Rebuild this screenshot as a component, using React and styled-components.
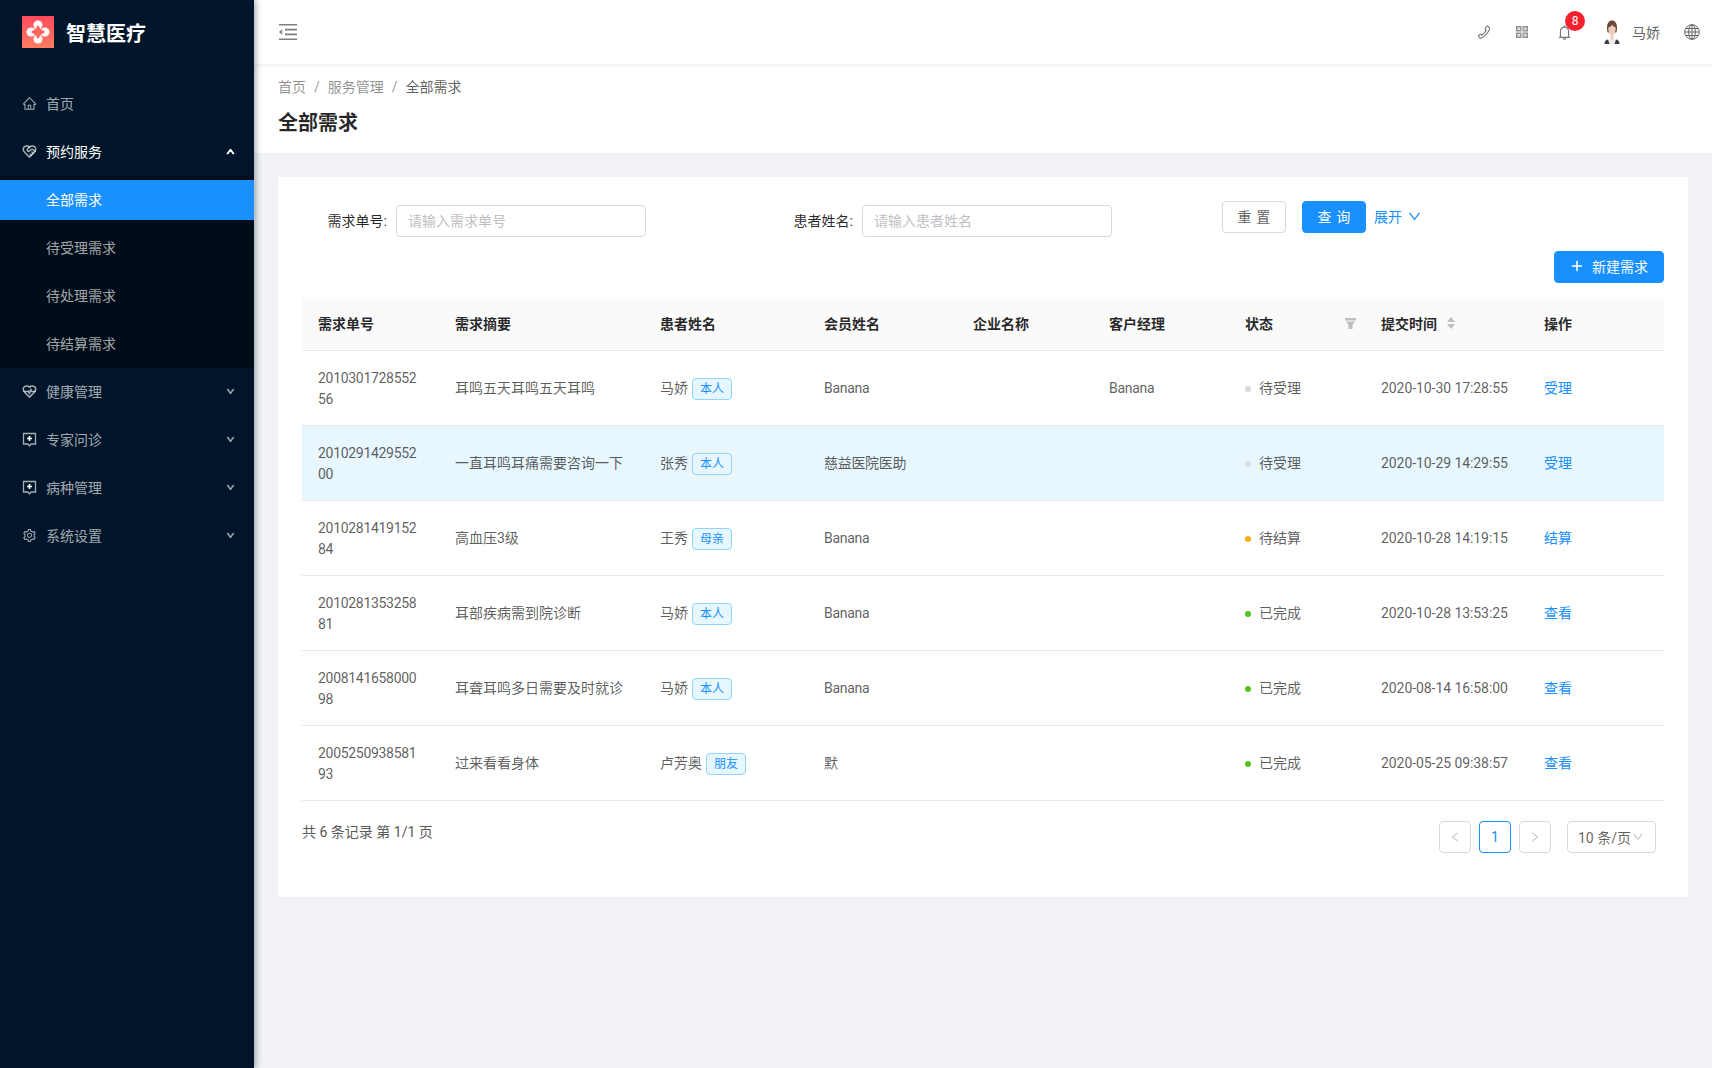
import React from 'react';
import styled, { createGlobalStyle } from 'styled-components';
import {
  AiOutlineHome,
  AiOutlineSetting,
  AiOutlinePlus,
  AiOutlineDown,
  AiOutlineUp,
  AiOutlineLeft,
  AiOutlineRight,
  AiOutlineBell,
} from 'react-icons/ai';
import { LuHeartHandshake, LuHeartPulse } from 'react-icons/lu';

const GlobalStyle = createGlobalStyle`
  html, body {
    margin: 0;
    padding: 0;
    background: #f0f2f5;
    font-family: Roboto, "Noto Sans CJK SC", sans-serif;
    font-size: 14px;
    color: #595959;
  }
  * {
    box-sizing: border-box;
  }
`;

const Layout = styled.div`
  display: flex;
  min-height: 1068px;
`;

const Sidebar = styled.aside`
  flex: 0 0 254px;
  background: #001529;
  box-shadow: 2px 0 6px rgba(0, 21, 41, 0.35);
  position: relative;
  z-index: 2;
`;

const Brand = styled.div`
  display: flex;
  align-items: center;
  gap: 12px;
  height: 64px;
  padding-left: 22px;
  margin-bottom: 16px;
`;

const BrandName = styled.span`
  color: #fff;
  font-size: 20px;
  font-weight: 700;
  font-family: "Noto Sans CJK SC", sans-serif;
`;

const MenuItem = styled.div`
  display: flex;
  align-items: center;
  height: 48px;
  padding: 0 19px 2px 22px;
  color: ${(p) => (p.$open ? '#fff' : 'rgba(255, 255, 255, 0.65)')};
`;

const MenuIcon = styled.span`
  display: flex;
  width: 24px;
  font-size: 15px;
  color: rgba(255, 255, 255, 0.65);
`;

const MenuLabel = styled.span`
  flex: 1;
`;

const MenuArrow = styled.span`
  display: flex;
  font-size: 9px;
  color: ${(p) => (p.$open ? '#fff' : 'rgba(255, 255, 255, 0.45)')};
  svg {
    stroke: currentColor;
    stroke-width: 120;
  }
`;

const SubMenu = styled.div`
  background: #000c17;
  padding: 4px 0;
  display: flex;
  flex-direction: column;
  gap: 8px;
`;

const SubItem = styled.div`
  display: flex;
  align-items: center;
  height: 40px;
  padding: 0 0 2px 46px;
  background: ${(p) => (p.$active ? '#1890ff' : 'transparent')};
  color: ${(p) => (p.$active ? '#fff' : 'rgba(255, 255, 255, 0.65)')};
`;

const Main = styled.main`
  flex: 1;
  min-width: 0;
`;

const TopBar = styled.header`
  display: flex;
  align-items: center;
  height: 64px;
  padding: 0 12px 0 25px;
  background: #fff;
  box-shadow: 0 1px 4px rgba(0, 21, 41, 0.08);
  position: relative;
`;

const FoldButton = styled.span`
  display: flex;
  color: #7f7f7f;
  flex: 1;
`;

const TopIcon = styled.span`
  display: flex;
  position: relative;
  color: #777;
  margin-left: ${(p) => p.$ml}px;
`;

const Badge = styled.span`
  position: absolute;
  top: -13px;
  left: 9px;
  width: 20px;
  height: 20px;
  border-radius: 50%;
  background: #f5222d;
  color: #fff;
  font-size: 12px;
  line-height: 20px;
  text-align: center;
`;

const UserName = styled.span`
  margin-left: 12px;
  color: #666;
`;

const PageHead = styled.section`
  background: #fff;
  height: 89px;
  padding: 12px 24px 0;
`;

const Crumbs = styled.div`
  display: flex;
  gap: 8px;
  line-height: 22px;
  color: rgba(0, 0, 0, 0.45);
`;

const CrumbLast = styled.span`
  color: rgba(0, 0, 0, 0.65);
`;

const PageTitle = styled.h1`
  margin: 10px 0 0;
  font-size: 20px;
  line-height: 28px;
  font-weight: 700;
  color: rgba(0, 0, 0, 0.85);
  font-family: "Noto Sans CJK SC", sans-serif;
`;

const Content = styled.div`
  padding: 24px;
`;

const Card = styled.div`
  background: #fff;
  padding: 24px 24px 44px;
`;

const SearchBar = styled.form`
  display: flex;
  align-items: flex-start;
`;

const Field = styled.label`
  display: flex;
  align-items: center;
  width: 344px;
  margin-top: 4px;
  margin-left: ${(p) => p.$ml || 0}px;
`;

const FieldLabel = styled.span`
  flex: 1;
  text-align: right;
  margin-right: 9px;
  padding-bottom: 2px;
  color: rgba(0, 0, 0, 0.85);
`;

const TextInput = styled.input`
  flex: 0 0 250px;
  width: 250px;
  height: 32px;
  padding: 0 11px;
  border: 1px solid #d9d9d9;
  border-radius: 4px;
  font: inherit;
  outline: none;
  &::placeholder {
    color: #bfbfbf;
  }
`;

const Button = styled.button`
  display: inline-flex;
  align-items: center;
  justify-content: center;
  height: 32px;
  width: ${(p) => p.$w}px;
  margin-left: ${(p) => p.$ml || 0}px;
  border: 1px solid ${(p) => (p.$primary ? '#1890ff' : '#d9d9d9')};
  border-radius: 4px;
  background: ${(p) => (p.$primary ? '#1890ff' : '#fff')};
  color: ${(p) => (p.$primary ? '#fff' : 'rgba(0, 0, 0, 0.65)')};
  font: inherit;
  letter-spacing: ${(p) => (p.$spaced ? '0.34em' : '0')};
  padding: ${(p) => (p.$spaced ? '0 0 2px 0.34em' : '0 0 2px')};
`;

const ExpandLink = styled.a`
  display: inline-flex;
  align-items: center;
  gap: 5px;
  height: 32px;
  margin-left: 8px;
  padding-bottom: 2px;
  color: #1890ff;
`;

const ExpandArrow = styled(AiOutlineDown)`
  font-size: 15px;
`;

const ToolRow = styled.div`
  display: flex;
  justify-content: flex-end;
  margin: 14px 0;
`;

const PlusIcon = styled(AiOutlinePlus)`
  font-size: 14px;
  margin-right: 8px;
  stroke: currentColor;
  stroke-width: 40;
`;

const Table = styled.table`
  width: 1362px;
  border-collapse: collapse;
  table-layout: fixed;
`;

const Col = styled.col`
  width: ${(p) => p.$w}px;
`;

const Th = styled.th`
  height: 53px;
  padding: 0 16px;
  text-align: left;
  font-weight: 700;
  font-size: 14px;
  background: #fafafa;
  color: rgba(0, 0, 0, 0.85);
  border-bottom: 1px solid #e8e8e8;
  font-family: "Noto Sans CJK SC", sans-serif;
  &:first-child {
    border-top-left-radius: 4px;
  }
  &:last-child {
    border-top-right-radius: 4px;
  }
`;

const ThInner = styled.div`
  display: flex;
  align-items: center;
  justify-content: ${(p) => (p.$spread ? 'space-between' : 'flex-start')};
  margin-right: ${(p) => (p.$spread ? '-7px' : '0')};
  gap: 10px;
`;

const Tr = styled.tr`
  background: ${(p) => (p.$hover ? '#e8f7fd' : '#fff')};
`;

const Td = styled.td`
  height: 75px;
  padding: 17px 16px 15px;
  line-height: 21px;
  color: rgba(0, 0, 0, 0.65);
  border-bottom: 1px solid #e8e8e8;
`;

const OrderNo = styled.span`
  display: block;
  max-width: 102px;
  word-break: break-all;
  letter-spacing: -0.3px;
`;

const Latin = styled.span`
  letter-spacing: -0.3px;
`;

const TimeText = styled.span`
  letter-spacing: -0.07px;
`;

const NameCell = styled.div`
  display: flex;
  align-items: center;
  gap: 4px;
`;

const Tag = styled.span`
  display: inline-block;
  height: 22px;
  padding: 0 7px;
  border: 1px solid #91d5ff;
  border-radius: 4px;
  background: #e6f7ff;
  color: #1890ff;
  font-size: 12px;
  line-height: 20px;
`;

const Status = styled.div`
  display: flex;
  align-items: center;
  gap: 8px;
`;

const Dot = styled.i`
  width: 6px;
  height: 6px;
  border-radius: 50%;
  background: ${(p) => p.$color};
`;

const ActionLink = styled.a`
  color: #1890ff;
`;

const Footer = styled.div`
  display: flex;
  justify-content: space-between;
  align-items: flex-start;
  margin-top: 20px;
  padding-right: 8px;
`;

const Summary = styled.span`
  line-height: 22px;
`;

const Pager = styled.div`
  display: flex;
  gap: 8px;
`;

const PageButton = styled.span`
  display: flex;
  align-items: center;
  justify-content: center;
  width: 32px;
  height: 32px;
  border: 1px solid ${(p) => (p.$active ? '#1890ff' : '#d9d9d9')};
  border-radius: 4px;
  color: ${(p) => (p.$active ? '#1890ff' : '#bfbfbf')};
  font-size: ${(p) => (p.$active ? '14px' : '12px')};
`;

const PageSize = styled.span`
  display: flex;
  align-items: center;
  justify-content: space-between;
  width: 89px;
  height: 32px;
  margin-left: 8px;
  padding: 0 11px 0 10px;
  border: 1px solid #d9d9d9;
  border-radius: 4px;
  color: rgba(0, 0, 0, 0.65);
  white-space: nowrap;
`;

const PageSizeArrow = styled(AiOutlineDown)`
  font-size: 12px;
  color: #bfbfbf;
`;

const Logo = () => (
  <svg width="32" height="32" viewBox="0 0 32 32">
    <defs>
      <linearGradient id="logoBg" x1="0" y1="0" x2="0" y2="1">
        <stop offset="0" stopColor="#ff4a5c" />
        <stop offset="1" stopColor="#ff7d62" />
      </linearGradient>
    </defs>
    <rect width="32" height="32" fill="url(#logoBg)" />
    <g fill="#fff">
      <circle cx="16" cy="9" r="4.500" />
      <circle cx="16" cy="23" r="4.500" />
      <circle cx="9" cy="16" r="4.500" />
      <circle cx="23" cy="16" r="4.500" />
    </g>
    <path d="M16 10l2 4 4 2-4 2-2 4-2-4-4-2 4-2z" fill="#ff6660" stroke="#ff6660" strokeWidth="1.500" strokeLinejoin="round" />
  </svg>
);

const FoldIcon = () => (
  <svg width="18" height="16" viewBox="0 0 18 16" fill="currentColor">
    <path d="M0 0h18v1.600H0zM0 14.400h18V16H0zM6 4.800h12v1.600H6zM6 9.600h12v1.600H6zM3.200 5.200v5.600L0 8z" />
  </svg>
);

const PhoneIcon = () => (
  <svg width="15" height="15" viewBox="0 0 16 16" fill="none" stroke="currentColor" strokeWidth="1.200">
    <path d="M10.200 1.600c.6-.5 1.300-.5 1.800 0l1.100 1.100c.5.5.6 1.100.2 1.700-1.400 4-4.600 7.400-8.700 9.600-.6.3-1.300.2-1.700-.3l-.9-1c-.5-.6-.4-1.300.1-1.700l1-.8c.5-.4 1.100-.4 1.600.1l.6.6c2-1.300 3.500-3.100 4.500-5.200l-.7-.6c-.5-.5-.5-1.100-.1-1.600z" />
  </svg>
);

const GridIcon = () => (
  <svg width="12" height="12" viewBox="0 0 12 12" fill="#ddd" stroke="#8c8c8c" strokeWidth="1.300">
    <rect x="0.650" y="0.650" width="4.200" height="4.200" />
    <rect x="7.150" y="0.650" width="4.200" height="4.200" />
    <rect x="0.650" y="7.150" width="4.200" height="4.200" />
    <rect x="7.150" y="7.150" width="4.200" height="4.200" />
  </svg>
);

const GlobeIcon = () => (
  <svg width="16" height="16" viewBox="0 0 16 16" fill="none" stroke="#666" strokeWidth="1">
    <circle cx="8" cy="8" r="7.300" />
    <ellipse cx="8" cy="8" rx="3.400" ry="7.300" />
    <path d="M8 .7v14.600M.7 8h14.600M1.800 4.500h12.400M1.800 11.500h12.400" />
  </svg>
);

const ClinicIcon = () => (
  <svg width="15" height="15" viewBox="0 0 15 15">
    <path d="M1.500 1.500h12v10.500H9.200L7.500 13.800 5.800 12H1.500z" fill="none" stroke="currentColor" strokeWidth="1.300" />
    <path d="M7.500 4v5M5 6.500h5" stroke="#fff" strokeWidth="1.600" />
  </svg>
);

const Avatar = () => (
  <svg width="16" height="24" viewBox="0 0 16 24">
    <path d="M.5 24c0-3.500 2-5 7.500-5s7.500 1.500 7.500 5z" fill="#f1eeec" />
    <path d="M.5 24c0-2.500 1-4 3.500-4.500L5.500 24zM15.500 24c0-2.500-1-4-3.500-4.500L10.500 24z" fill="#3a414c" />
    <path d="M3 8c0-5 2-7.500 5-7.500S13 3 13 8c0 2-.3 3.500-.8 4.500H3.800C3.300 11.500 3 10 3 8z" fill="#6b4a3e" />
    <path d="M4.300 7.500c1.500-.3 3-1.300 3.900-3 .7 1.500 2 2.600 3.500 3 .2 4-1.300 8-3.700 8s-3.900-4-3.700-8z" fill="#eccdbd" />
    <rect x="6.500" y="14" width="3" height="5.500" fill="#eccdbd" />
  </svg>
);

const FilterIcon = () => (
  <svg width="11" height="11" viewBox="0 0 11 11" fill="#bfbfbf">
    <path d="M0 0h11v2.500H0zM1 3.500h9L7.500 7v4h-4V7z" />
  </svg>
);

const SortIcon = () => (
  <svg width="8" height="12" viewBox="0 0 8 12" fill="#bfbfbf">
    <path d="M4 0l4 5H0zM4 12L0 7h8z" />
  </svg>
);

const menuTop = [
  { label: '健康管理', icon: <LuHeartPulse strokeWidth={2.4} /> },
  { label: '专家问诊', icon: <ClinicIcon /> },
  { label: '病种管理', icon: <ClinicIcon /> },
  { label: '系统设置', icon: <AiOutlineSetting /> },
];

const subMenu = ['全部需求', '待受理需求', '待处理需求', '待结算需求'];

const columns = [
  { title: '需求单号', w: 137 },
  { title: '需求摘要', w: 205 },
  { title: '患者姓名', w: 164 },
  { title: '会员姓名', w: 149 },
  { title: '企业名称', w: 136 },
  { title: '客户经理', w: 136 },
  { title: '状态', w: 136, filter: true },
  { title: '提交时间', w: 163, sort: true },
  { title: '操作', w: 136 },
];

const statusColor = { 待受理: '#d9d9d9', 待结算: '#faad14', 已完成: '#52c41a' };

const rows = [
  { no: '201030172855256', summary: '耳鸣五天耳鸣五天耳鸣', patient: '马娇', rel: '本人', member: 'Banana', manager: 'Banana', status: '待受理', time: '2020-10-30 17:28:55', action: '受理' },
  { no: '201029142955200', summary: '一直耳鸣耳痛需要咨询一下', patient: '张秀', rel: '本人', member: '慈益医院医助', manager: '', status: '待受理', time: '2020-10-29 14:29:55', action: '受理', hover: true },
  { no: '201028141915284', summary: '高血压3级', patient: '王秀', rel: '母亲', member: 'Banana', manager: '', status: '待结算', time: '2020-10-28 14:19:15', action: '结算' },
  { no: '201028135325881', summary: '耳部疾病需到院诊断', patient: '马娇', rel: '本人', member: 'Banana', manager: '', status: '已完成', time: '2020-10-28 13:53:25', action: '查看' },
  { no: '200814165800098', summary: '耳聋耳鸣多日需要及时就诊', patient: '马娇', rel: '本人', member: 'Banana', manager: '', status: '已完成', time: '2020-08-14 16:58:00', action: '查看' },
  { no: '200525093858193', summary: '过来看看身体', patient: '卢芳奥', rel: '朋友', member: '默', manager: '', status: '已完成', time: '2020-05-25 09:38:57', action: '查看' },
];

export default function App() {
  return (
    <Layout>
      <GlobalStyle />
      <Sidebar>
        <Brand>
          <Logo />
          <BrandName>智慧医疗</BrandName>
        </Brand>
        <MenuItem>
          <MenuIcon><AiOutlineHome /></MenuIcon>
          <MenuLabel>首页</MenuLabel>
        </MenuItem>
        <MenuItem $open>
          <MenuIcon><LuHeartHandshake strokeWidth={2.4} /></MenuIcon>
          <MenuLabel>预约服务</MenuLabel>
          <MenuArrow $open><AiOutlineUp /></MenuArrow>
        </MenuItem>
        <SubMenu>
          {subMenu.map((label, i) => (
            <SubItem key={label} $active={i === 0}>{label}</SubItem>
          ))}
        </SubMenu>
        {menuTop.map((item) => (
          <MenuItem key={item.label}>
            <MenuIcon>{item.icon}</MenuIcon>
            <MenuLabel>{item.label}</MenuLabel>
            <MenuArrow><AiOutlineDown /></MenuArrow>
          </MenuItem>
        ))}
      </Sidebar>
      <Main>
        <TopBar>
          <FoldButton><FoldIcon /></FoldButton>
          <TopIcon><PhoneIcon /></TopIcon>
          <TopIcon $ml={24}><GridIcon /></TopIcon>
          <TopIcon $ml={28}>
            <AiOutlineBell size={17} />
            <Badge>8</Badge>
          </TopIcon>
          <TopIcon $ml={31}><Avatar /></TopIcon>
          <UserName>马娇</UserName>
          <TopIcon $ml={24}><GlobeIcon /></TopIcon>
        </TopBar>
        <PageHead>
          <Crumbs>
            <span>首页</span>
            <span>/</span>
            <span>服务管理</span>
            <span>/</span>
            <CrumbLast>全部需求</CrumbLast>
          </Crumbs>
          <PageTitle>全部需求</PageTitle>
        </PageHead>
        <Content>
          <Card>
            <SearchBar>
              <Field>
                <FieldLabel>需求单号:</FieldLabel>
                <TextInput placeholder="请输入需求单号" />
              </Field>
              <Field $ml={122}>
                <FieldLabel>患者姓名:</FieldLabel>
                <TextInput placeholder="请输入患者姓名" />
              </Field>
              <Button type="button" $w={64} $ml={110} $spaced>重置</Button>
              <Button type="button" $w={64} $ml={16} $primary $spaced>查询</Button>
              <ExpandLink>展开 <ExpandArrow /></ExpandLink>
            </SearchBar>
            <ToolRow>
              <Button type="button" $w={110} $primary>
                <PlusIcon />
                新建需求
              </Button>
            </ToolRow>
            <Table>
              <colgroup>
                {columns.map((c) => <Col key={c.title} $w={c.w} />)}
              </colgroup>
              <thead>
                <tr>
                  {columns.map((c) => (
                    <Th key={c.title}>
                      <ThInner $spread={c.filter}>
                        {c.title}
                        {c.filter && <FilterIcon />}
                        {c.sort && <SortIcon />}
                      </ThInner>
                    </Th>
                  ))}
                </tr>
              </thead>
              <tbody>
                {rows.map((r) => (
                  <Tr key={r.no} $hover={r.hover}>
                    <Td><OrderNo>{r.no}</OrderNo></Td>
                    <Td>{r.summary}</Td>
                    <Td>
                      <NameCell>
                        {r.patient}
                        <Tag>{r.rel}</Tag>
                      </NameCell>
                    </Td>
                    <Td><Latin>{r.member}</Latin></Td>
                    <Td />
                    <Td><Latin>{r.manager}</Latin></Td>
                    <Td>
                      <Status>
                        <Dot $color={statusColor[r.status]} />
                        {r.status}
                      </Status>
                    </Td>
                    <Td><TimeText>{r.time}</TimeText></Td>
                    <Td><ActionLink>{r.action}</ActionLink></Td>
                  </Tr>
                ))}
              </tbody>
            </Table>
            <Footer>
              <Summary>共 6 条记录 第 1/1 页</Summary>
              <Pager>
                <PageButton><AiOutlineLeft /></PageButton>
                <PageButton $active>1</PageButton>
                <PageButton><AiOutlineRight /></PageButton>
                <PageSize>10 条/页<PageSizeArrow /></PageSize>
              </Pager>
            </Footer>
          </Card>
        </Content>
      </Main>
    </Layout>
  );
}
